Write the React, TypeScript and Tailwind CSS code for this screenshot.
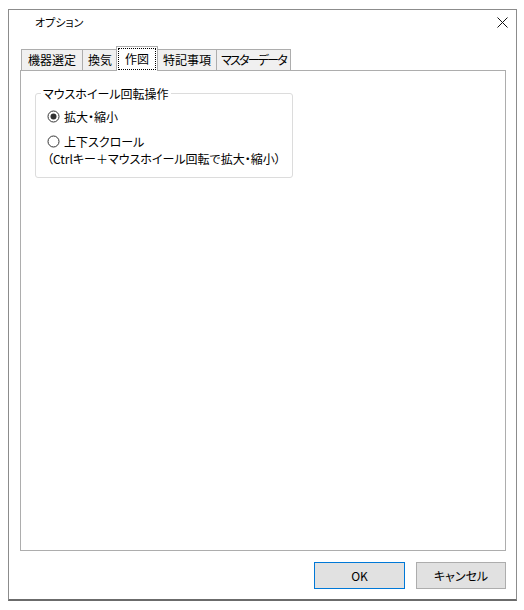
import React from "react";

const font = "font-['Noto_Sans_CJK_JP','Noto_Sans_CJK_SC',sans-serif] [font-feature-settings:'palt']";

function Tab({ label, w, selected, tight }: { label: string; w: string; selected?: boolean; tight?: boolean }) {
  if (selected) {
    return (
      <div className={`relative z-10 -mb-[1px] h-[25px] ${w} border-l border-t border-r border-[#adadad] bg-white -mx-[1px] p-[1px]`}>
        <div className="h-full w-full border border-dotted border-black flex items-center justify-center pb-[1px]">
          <span className="leading-none whitespace-nowrap">{label}</span>
        </div>
      </div>
    );
  }
  return (
    <div className={`h-[21px] ${w} border-l border-t border-r border-[#adadad] bg-[#f0f0f0] flex items-center justify-center -mr-[1px]`}>
      <span className={`leading-none whitespace-nowrap ${tight ? "tracking-[-1.8px]" : ""}`}>{label}</span>
    </div>
  );
}

function Radio({ checked }: { checked?: boolean }) {
  return (
    <svg width="13" height="13" viewBox="0 0 13 13" className="shrink-0">
      <circle cx="6.5" cy="6.5" r="5.5" fill="white" stroke="#333" strokeWidth="1" />
      {checked && <circle cx="6.5" cy="6.5" r="3" fill="#333" />}
    </svg>
  );
}

export default function App() {
  return (
    <div className={`w-[524px] h-[610px] bg-white text-[12px] text-black pl-[8px] pt-[9px] ${font}`}>
      <div className="w-[509px] h-[592px] border-l border-t border-r border-[#8c8c8c] border-b-2 border-b-[#6b6b6b] flex flex-col">
        {/* title bar */}
        <div className="h-[25px] flex items-center justify-between pl-[26px] pr-[8px]">
          <span className="text-[11px] leading-none">オプション</span>
          <svg width="11" height="11" viewBox="0 0 11 11">
            <path d="M0.5 0.5 L10.5 10.5 M10.5 0.5 L0.5 10.5" stroke="#111" strokeWidth="1" fill="none" />
          </svg>
        </div>
        {/* tabs */}
        <div className="mt-[11px] ml-[11px] mr-[10px]">
          <div className="h-[24px] flex items-end pl-[1px]">
            <Tab label="機器選定" w="w-[62px]" />
            <Tab label="換気" w="w-[36px]" />
            <Tab label="作図" w="w-[42px]" selected />
            <Tab label="特記事項" w="w-[60px]" />
            <Tab label="マスターデータ" w="w-[75px]" tight />
          </div>
          <div className="h-[481px] border border-[#adadad] bg-white pl-[14px] pt-[22px]">
            <div className="relative w-[258px] h-[85px] border border-[#dcdcdc] rounded-[3px]">
              <span className="absolute -top-[9px] left-[5px] bg-white px-[2px] leading-[17px] whitespace-nowrap">
                マウスホイール回転操作
              </span>
              <div className="pt-[14px] pl-[11px]">
                <div className="flex items-center gap-[4px] h-[17px]">
                  <Radio checked />
                  <span className="leading-none whitespace-nowrap">拡大・縮小</span>
                </div>
                <div className="flex items-center gap-[4px] h-[17px] mt-[8px]">
                  <Radio />
                  <span className="leading-none whitespace-nowrap">上下スクロール</span>
                </div>
                <div className="h-[17px] flex items-center">
                  <span className="leading-none whitespace-nowrap">（Ctrlキー＋マウスホイール回転で拡大・縮小）</span>
                </div>
              </div>
            </div>
          </div>
        </div>
        {/* buttons */}
        <div className="mt-[11px] flex justify-end gap-[11px] mr-[10px]">
          <button className="w-[91px] h-[27px] bg-[#e1e1e1] border border-[#0078d7] flex items-center justify-center">
            <span className="leading-none">OK</span>
          </button>
          <button className="w-[90px] h-[27px] bg-[#e1e1e1] border border-[#adadad] flex items-center justify-center">
            <span className="leading-none">キャンセル</span>
          </button>
        </div>
      </div>
    </div>
  );
}
